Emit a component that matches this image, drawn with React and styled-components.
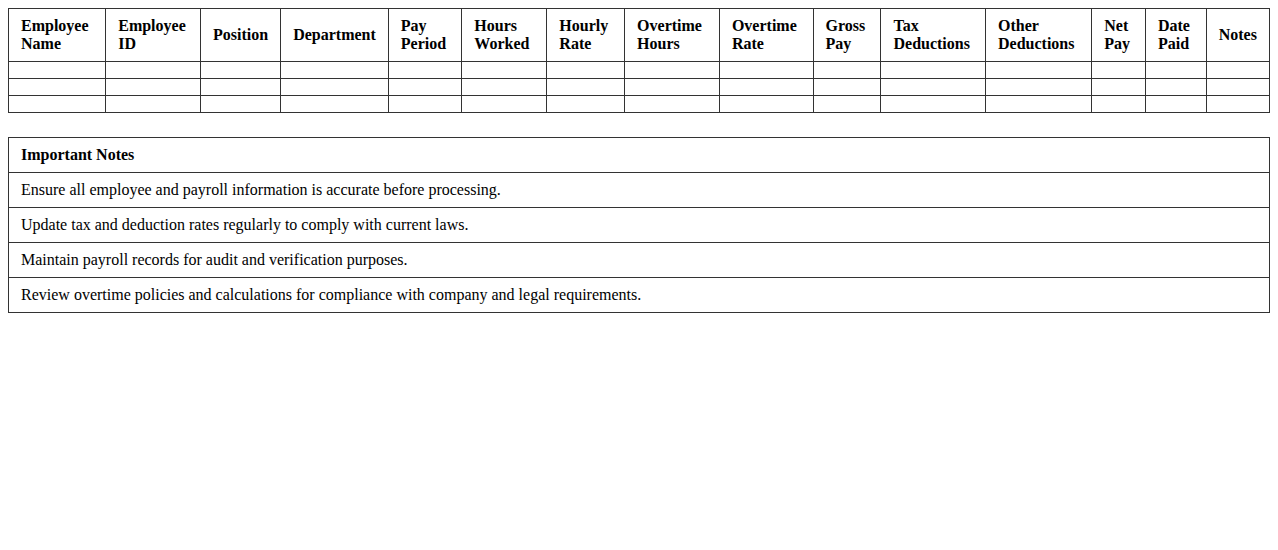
import React from 'react'
import { styled, createGlobalStyle } from 'styled-components'

const GlobalStyle = createGlobalStyle`
    body {
        margin: 8px;
        background: #fff;
        font-family: "Liberation Serif", "Times New Roman", serif;
        color: #000;
    }
`;

const Table = styled.table`
    width: 100%;
    border-collapse: collapse;
    margin-bottom: ${({gap})=>gap || 0}px;
`;

const Th = styled.th`
    border: 1px solid #333;
    padding: 8px 12px;
    text-align: left;
    vertical-align: middle;
    font-size: 16px;
    font-weight: 700;
    line-height: 18px;
`;

const Td = styled.td`
    border: 1px solid #333;
    padding: 8px 12px;
    font-size: 16px;
    line-height: 18px;
    height: ${({empty})=>empty ? '0' : 'auto'};
`;

const columns = [
    'Employee Name', 'Employee ID', 'Position', 'Department', 'Pay Period',
    'Hours Worked', 'Hourly Rate', 'Overtime Hours', 'Overtime Rate', 'Gross Pay',
    'Tax Deductions', 'Other Deductions', 'Net Pay', 'Date Paid', 'Notes'
];

const notes = [
    'Ensure all employee and payroll information is accurate before processing.',
    'Update tax and deduction rates regularly to comply with current laws.',
    'Maintain payroll records for audit and verification purposes.',
    'Review overtime policies and calculations for compliance with company and legal requirements.'
];

export default function App() {
  return (
    <>
        <GlobalStyle />
        <Table gap={24}>
            <thead>
                <tr>
                    {columns.map(c => <Th key={c}>{c}</Th>)}
                </tr>
            </thead>
            <tbody>
                {[0,1,2].map(r => (
                    <tr key={r}>
                        {columns.map(c => <Td key={c} empty />)}
                    </tr>
                ))}
            </tbody>
        </Table>
        <Table>
            <thead>
                <tr><Th>Important Notes</Th></tr>
            </thead>
            <tbody>
                {notes.map(n => <tr key={n}><Td>{n}</Td></tr>)}
            </tbody>
        </Table>
    </>
  )
}
